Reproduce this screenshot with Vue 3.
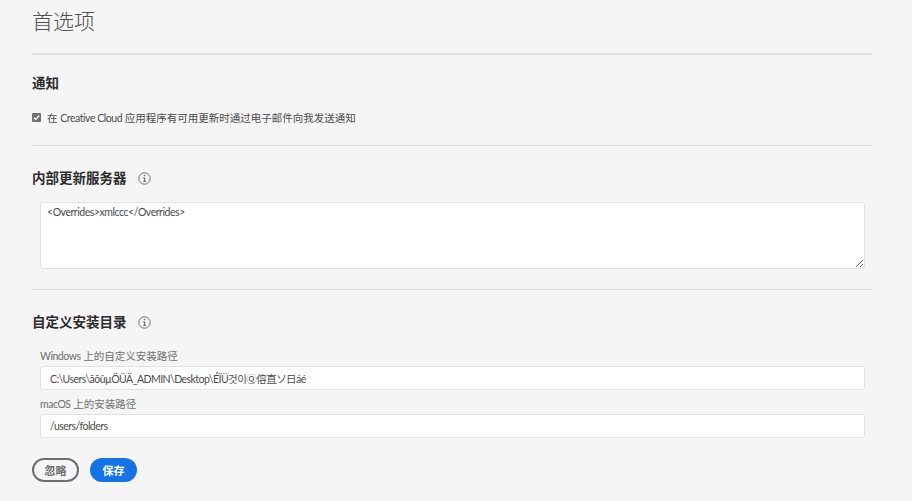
<script setup>
import { ref } from "vue";

const notify = ref(true);
const overrides = ref("<Overrides>xmlccc</Overrides>");
const winPath = ref("C:\\Users\\ãõûµÖÜÄ_ADMIN\\Desktop\\ÉÏÜ것이Ⓠ傛直ソ日áé");
const macPath = ref("/users/folders");
</script>

<template>
  <div class="page">
    <h1 class="title">首选项</h1>

    <section class="block first">
      <h2 class="heading">通知</h2>
      <label class="check-row">
        <input v-model="notify" class="native" type="checkbox" />
        <span class="box">
          <svg viewBox="0 0 9 9">
            <path d="M1.8 4.6l1.9 1.9 3.5-4" fill="none" stroke="#f5f5f5" stroke-width="1.4" />
          </svg>
        </span>
        <span>在 <span class="latin">Creative Cloud</span> 应用程序有可用更新时通过电子邮件向我发送通知</span>
      </label>
    </section>

    <section class="block">
      <h2 class="heading">
        内部更新服务器
        <svg class="info" width="13" height="13" viewBox="0 0 13 13">
          <circle cx="6.5" cy="6.5" r="5.7" fill="none" stroke="#6e6e6e" />
          <rect x="5.8" y="2.8" width="1.5" height="1.5" fill="#6e6e6e" />
          <path d="M5 5.6h2.2v3.6h1v.8H5v-.8h1V6.4H5z" fill="#6e6e6e" />
        </svg>
      </h2>
      <div class="indent">
        <textarea v-model="overrides" class="area"></textarea>
      </div>
    </section>

    <section class="block">
      <h2 class="heading">
        自定义安装目录
        <svg class="info" width="13" height="13" viewBox="0 0 13 13">
          <circle cx="6.5" cy="6.5" r="5.7" fill="none" stroke="#6e6e6e" />
          <rect x="5.8" y="2.8" width="1.5" height="1.5" fill="#6e6e6e" />
          <path d="M5 5.6h2.2v3.6h1v.8H5v-.8h1V6.4H5z" fill="#6e6e6e" />
        </svg>
      </h2>
      <div class="indent fields">
        <label class="field-label"><span class="latin">Windows</span> 上的自定义安装路径</label>
        <input v-model="winPath" class="field" type="text" />
        <label class="field-label second"><span class="latin">macOS</span> 上的安装路径</label>
        <input v-model="macPath" class="field" type="text" />
      </div>
    </section>

    <div class="actions">
      <button class="btn ghost" type="button">忽略</button>
      <button class="btn primary" type="button">保存</button>
    </div>
  </div>
</template>

<style>
html,
body {
  margin: 0;
  background: #f5f5f5;
}
</style>

<style scoped>
.page {
  box-sizing: border-box;
  width: 840px;
  height: 501px;
  margin-left: 32px;
  overflow: hidden;
  font-family: Lato, "Noto Sans CJK SC", sans-serif;
  color: #4b4b4b;
  font-size: 11px;
}

.latin {
  letter-spacing: -0.45px;
}

.title {
  box-sizing: border-box;
  height: 55px;
  margin: 0;
  padding-top: 6px;
  border-bottom: 2px solid #e1e1e1;
  font-size: 21px;
  line-height: 30px;
  font-weight: 300;
  color: #505050;
}

.block {
  padding-bottom: 20px;
  border-bottom: 1px solid #e1e1e1;
}

.block.first {
  padding-top: 18px;
  padding-bottom: 19px;
}

.block:not(.first) {
  padding-top: 22px;
}

.block:last-of-type {
  border-bottom: 0;
  padding-bottom: 0;
}

.heading {
  display: flex;
  align-items: center;
  margin: 0;
  font-size: 13.5px;
  line-height: 20px;
  font-weight: 700;
  color: #2c2c2c;
}

.info {
  margin-left: 11px;
}

.check-row {
  display: flex;
  align-items: center;
  height: 18px;
  margin-top: 15px;
  font-size: 10.5px;
  color: #4b4b4b;
}

.native {
  display: none;
}

.box {
  display: flex;
  flex: none;
  width: 9px;
  height: 9px;
  margin-right: 6px;
  border-radius: 1px;
  background: #6e6e6e;
}

.box svg {
  width: 9px;
  height: 9px;
}

.indent {
  margin: 14px 7px 0 8px;
}

.area {
  display: block;
  box-sizing: border-box;
  width: 100%;
  height: 67px;
  padding: 3px 6px;
  border: 1px solid #e1e1e1;
  border-radius: 3px;
  background: #fff;
  font-family: inherit;
  font-size: 10.5px;
  letter-spacing: -0.45px;
  color: #4b4b4b;
  outline: none;
}

.fields {
  margin-top: 16px;
}

.field-label {
  display: block;
  height: 16px;
  font-size: 10.5px;
  line-height: 16px;
  color: #6e6e6e;
}

.second {
  margin-top: 6px;
}

.field {
  display: block;
  box-sizing: border-box;
  width: 100%;
  height: 24px;
  margin-top: 2px;
  padding: 0 9px;
  border: 1px solid #e1e1e1;
  border-radius: 3px;
  background: #fff;
  font-family: inherit;
  font-size: 10.5px;
  letter-spacing: -0.55px;
  color: #4b4b4b;
  outline: none;
}

.actions {
  display: flex;
  gap: 11px;
  margin-top: 20px;
}

.btn {
  box-sizing: border-box;
  width: 47px;
  height: 24px;
  padding: 0;
  border-radius: 12px;
  font-family: inherit;
  font-size: 11px;
  font-weight: 700;
}

.ghost {
  border: 2px solid #6e6e6e;
  background: transparent;
  color: #6e6e6e;
}

.primary {
  border: 0;
  background: #1473e6;
  color: #fff;
}
</style>
